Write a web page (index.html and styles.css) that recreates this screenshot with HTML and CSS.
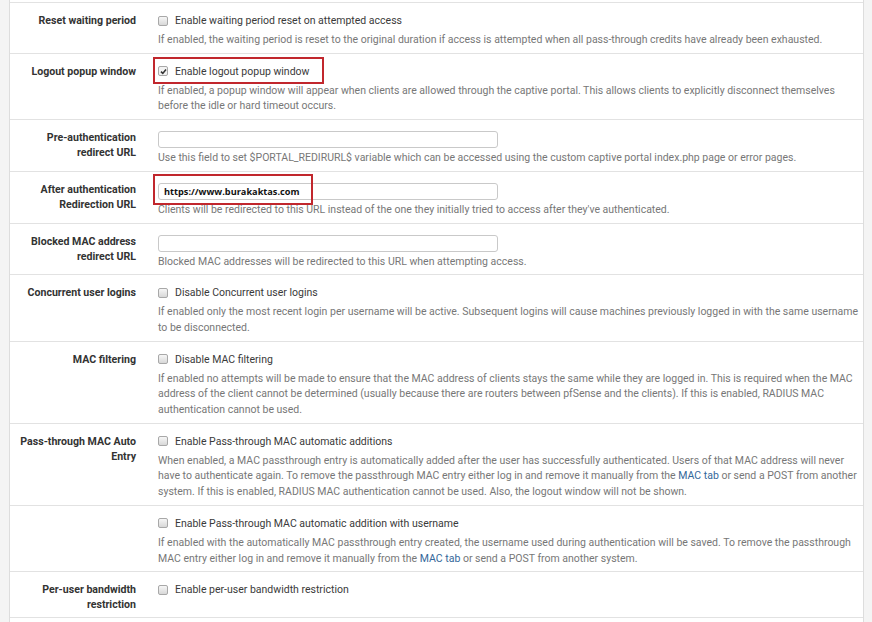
FILE: index.html
```html
<!DOCTYPE html>
<html lang="en">
<head>
    <meta charset="UTF-8">
    <meta name="viewport" content="width=device-width, initial-scale=1.0">
    <title>Captive Portal</title>
    <link rel="stylesheet" href="styles.css">
</head>
<body>
    <div class="panel">

        <div class="form-row">
            <div class="form-label">Reset waiting period</div>
            <div class="form-field">
                <label class="check"><span class="box"></span>Enable waiting period reset on attempted access</label>
                <p class="help">If enabled, the waiting period is reset to the original duration if access is attempted when all pass-through credits have already been exhausted.</p>
            </div>
        </div>

        <div class="form-row">
            <div class="form-label">Logout popup window</div>
            <div class="form-field">
                <label class="check marked"><span class="box checked"><svg viewBox="0 0 9 9" width="9" height="9"><path d="M2 4.6 L3.8 6.4 L7 2.6" fill="none" stroke="#333" stroke-width="1.6"/></svg></span>Enable logout popup window</label>
                <p class="help">If enabled, a popup window will appear when clients are allowed through the captive portal. This allows clients to explicitly disconnect themselves before the idle or hard timeout occurs.</p>
            </div>
        </div>

        <div class="form-row">
            <div class="form-label">Pre-authentication redirect URL</div>
            <div class="form-field">
                <input type="text" class="text-input">
                <p class="help">Use this field to set $PORTAL_REDIRURL$ variable which can be accessed using the custom captive portal index.php page or error pages.</p>
            </div>
        </div>

        <div class="form-row">
            <div class="form-label">After authentication Redirection URL</div>
            <div class="form-field">
                <div class="marked input-mark">
                    <input type="text" class="text-input filled" value="https://www.burakaktas.com">
                </div>
                <p class="help">Clients will be redirected to this URL instead of the one they initially tried to access after they've authenticated.</p>
            </div>
        </div>

        <div class="form-row">
            <div class="form-label">Blocked MAC address redirect URL</div>
            <div class="form-field">
                <input type="text" class="text-input">
                <p class="help">Blocked MAC addresses will be redirected to this URL when attempting access.</p>
            </div>
        </div>

        <div class="form-row">
            <div class="form-label">Concurrent user logins</div>
            <div class="form-field">
                <label class="check"><span class="box"></span>Disable Concurrent user logins</label>
                <p class="help">If enabled only the most recent login per username will be active. Subsequent logins will cause machines previously logged in with the same username to be disconnected.</p>
            </div>
        </div>

        <div class="form-row">
            <div class="form-label">MAC filtering</div>
            <div class="form-field">
                <label class="check"><span class="box"></span>Disable MAC filtering</label>
                <p class="help">If enabled no attempts will be made to ensure that the MAC address of clients stays the same while they are logged in. This is required when the MAC address of the client cannot be determined (usually because there are routers between pfSense and the clients). If this is enabled, RADIUS MAC authentication cannot be used.</p>
            </div>
        </div>

        <div class="form-row">
            <div class="form-label">Pass-through MAC Auto Entry</div>
            <div class="form-field">
                <label class="check"><span class="box"></span>Enable Pass-through MAC automatic additions</label>
                <p class="help">When enabled, a MAC passthrough entry is automatically added after the user has successfully authenticated. Users of that MAC address will never have to authenticate again. To remove the passthrough MAC entry either log in and remove it manually from the <a href="#">MAC tab</a> or send a POST from another system. If this is enabled, RADIUS MAC authentication cannot be used. Also, the logout window will not be shown.</p>
            </div>
        </div>

        <div class="form-row">
            <div class="form-label"></div>
            <div class="form-field">
                <label class="check"><span class="box"></span>Enable Pass-through MAC automatic addition with username</label>
                <p class="help">If enabled with the automatically MAC passthrough entry created, the username used during authentication will be saved. To remove the passthrough MAC entry either log in and remove it manually from the <a href="#">MAC tab</a> or send a POST from another system.</p>
            </div>
        </div>

        <div class="form-row">
            <div class="form-label">Per-user bandwidth restriction</div>
            <div class="form-field">
                <label class="check"><span class="box"></span>Enable per-user bandwidth restriction</label>
            </div>
        </div>

        <div class="form-row last"></div>
    </div>
</body>
</html>
```

FILE: styles.css
```css
body {
    margin: 0;
    background-color: #F4F4F4;
    font-family: Roboto, 'Liberation Sans', sans-serif;
    color: #333;
}

.panel {
    margin: 0 8px 0 9px;
    padding-top: 2px;
    background-color: #FFF;
    border-left: 1px solid #DDD;
    border-right: 1px solid #DDD;
}

.form-row {
    display: grid;
    grid-template-columns: 136px 1fr;
    column-gap: 12px;
    padding: 10px 4.5px 5px 0;
    border-top: 1px solid #E2E2E2;
}

.form-row.last {
    height: 20px;
}

.form-label {
    padding: 0 10px 0 8px;
    text-align: right;
    font-size: 10.6px;
    font-weight: 700;
    line-height: 15px;
}

.check {
    display: flex;
    align-items: center;
    width: max-content;
    height: 15px;
    font-size: 10.5px;
    color: #3A3A3A;
}

.box {
    display: inline-block;
    width: 8px;
    height: 8px;
    margin-right: 7px;
    border: 1px solid #A8A8A8;
    border-radius: 2px;
    background: linear-gradient(#F6F6F6, #D8D8D8);
}

.box svg {
    display: block;
}

.box.checked {
    background: #F2F2F2;
}

.marked {
    position: relative;
}

.marked::after {
    content: "";
    position: absolute;
    border: 2px solid #C1272D;
    pointer-events: none;
}

.check.marked::after {
    top: -7px;
    bottom: -5px;
    left: -5px;
    right: -15px;
}

.input-mark::after {
    top: -9px;
    bottom: -5px;
    left: -5px;
    width: 156px;
}

.text-input {
    display: block;
    box-sizing: border-box;
    width: 340px;
    height: 17px;
    margin-top: 1px;
    padding: 0 5px;
    border: 1px solid #C9C9C9;
    border-radius: 3px;
    background: #FFF;
}

.text-input.filled {
    font-family: 'Open Sans', sans-serif;
    font-weight: 700;
    font-size: 9.2px;
    color: #111;
}

.help {
    margin: 2px 0 0;
    font-size: 10.5px;
    line-height: 15.7px;
    color: #777;
}

.check + .help {
    margin-top: 4px;
}

.help a {
    color: #33679A;
    text-decoration: none;
}
```
